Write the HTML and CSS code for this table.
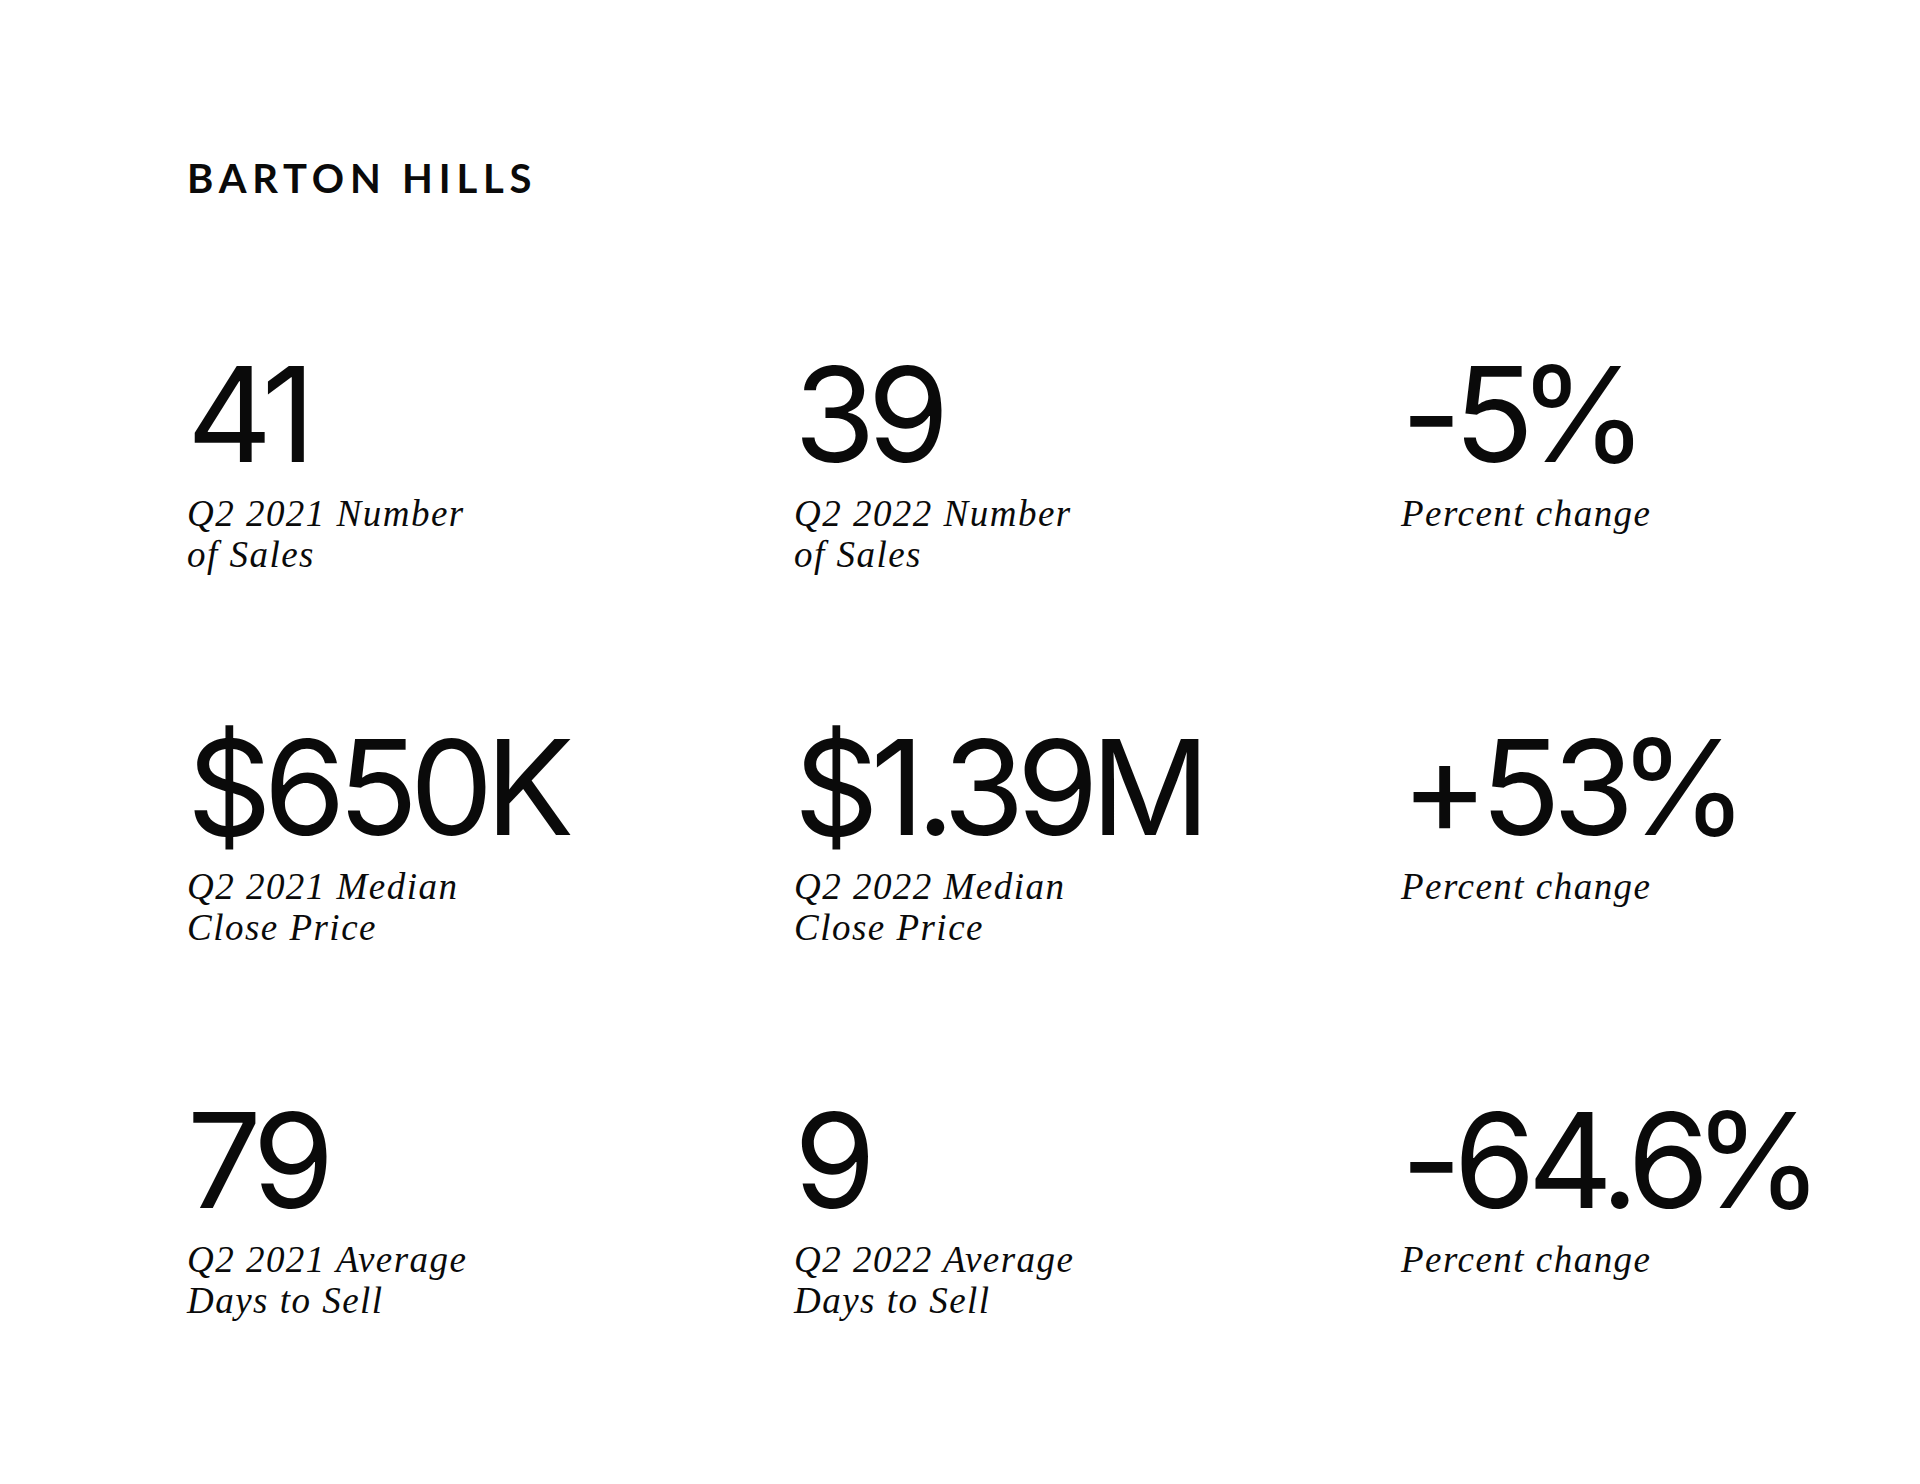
FILE: index.html
```html
<!DOCTYPE html>
<html>
<head>
<meta charset="utf-8">
<link rel="stylesheet" href="styles.css">
</head>
<body>
<main class="page">
  <h1 class="title">BARTON HILLS</h1>
  <section class="grid">
    <div class="stat"><div class="value">41</div><div class="label">Q2 2021 Number<br>of Sales</div></div>
    <div class="stat"><div class="value">39</div><div class="label">Q2 2022 Number<br>of Sales</div></div>
    <div class="stat"><div class="value">-5<span class="pct">%</span></div><div class="label">Percent change</div></div>

    <div class="stat"><div class="value">$650K</div><div class="label">Q2 2021 Median<br>Close Price</div></div>
    <div class="stat"><div class="value">$1.39M</div><div class="label">Q2 2022 Median<br>Close Price</div></div>
    <div class="stat"><div class="value">+53<span class="pct">%</span></div><div class="label">Percent change</div></div>

    <div class="stat"><div class="value">79</div><div class="label">Q2 2021 Average<br>Days to Sell</div></div>
    <div class="stat"><div class="value">9</div><div class="label">Q2 2022 Average<br>Days to Sell</div></div>
    <div class="stat"><div class="value">-64.6<span class="pct">%</span></div><div class="label">Percent change</div></div>
  </section>
</main>
</body>
</html>
```

FILE: styles.css
```css
html, body {
  margin: 0;
  padding: 0;
  background: #ffffff;
  color: #0a0a0a;
}

.page {
  padding: 150px 0 0 187px;
}

.title {
  margin: 0;
  font-family: "Lato", "Noto Sans", sans-serif;
  font-weight: 700;
  font-size: 40px;
  line-height: 56px;
  letter-spacing: 0.145em;
}

.grid {
  display: grid;
  grid-template-columns: 607px 607px 607px;
  row-gap: 162px;
  margin-top: 158px;
}

.stat {
  display: flex;
  flex-direction: column;
}

.value {
  font-family: "Inter", "Lato", sans-serif;
  font-weight: 400;
  font-size: 132px;
  line-height: 100px;
  letter-spacing: -0.06em;
  font-variant-numeric: proportional-nums;
}

.pct {
  margin-left: -0.06em;
}

.label {
  margin-top: 29px;
  font-family: "Liberation Serif", serif;
  font-style: italic;
  font-size: 37px;
  line-height: 41px;
  letter-spacing: 0.04em;
}
```
